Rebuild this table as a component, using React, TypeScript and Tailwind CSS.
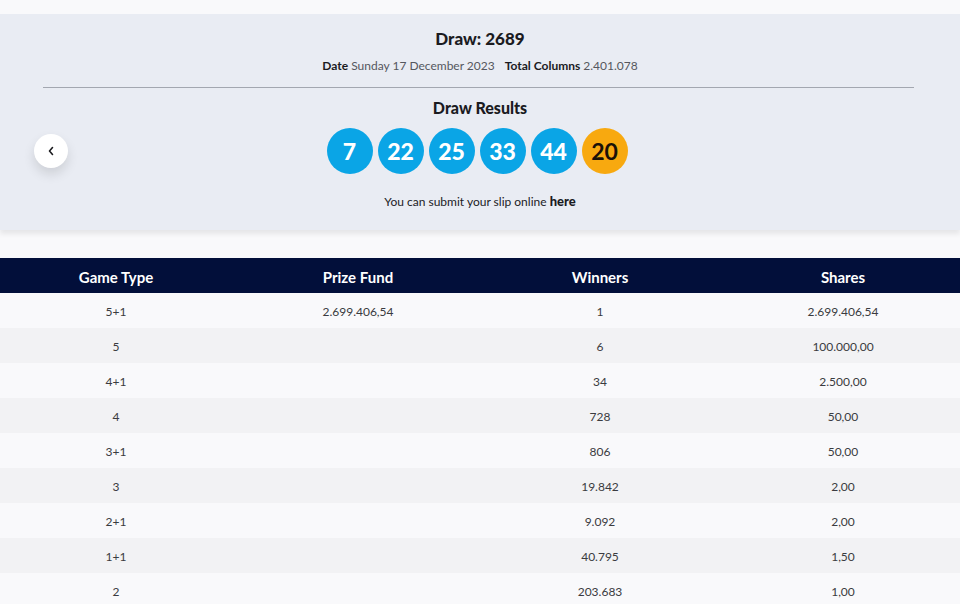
import React from "react";

const rows = [
  ["5+1", "2.699.406,54", "1", "2.699.406,54"],
  ["5", "", "6", "100.000,00"],
  ["4+1", "", "34", "2.500,00"],
  ["4", "", "728", "50,00"],
  ["3+1", "", "806", "50,00"],
  ["3", "", "19.842", "2,00"],
  ["2+1", "", "9.092", "2,00"],
  ["1+1", "", "40.795", "1,50"],
  ["2", "", "203.683", "1,00"],
];

export default function App() {
  const font = { fontFamily: '"Lato", "Liberation Sans", sans-serif' };
  return (
    <div className="w-[960px] h-[604px] overflow-hidden bg-[#f9f9fb] text-[#1b1b1f]" style={font}>
      <div className="h-[14px] bg-[#f9f9fb]" />
      <div className="relative h-[216px] bg-[#e9ecf3] shadow-[0_4px_5px_rgba(0,0,0,0.08)] flex flex-col items-center">
        <div className="mt-[14px] text-[17px] font-black leading-[22px]">Draw: 2689</div>
        <div className="mt-[8px] text-[12px] leading-[16px] text-[#55575e]">
          <span className="font-bold text-[#1b1b1f]">Date</span> Sunday 17 December 2023
          <span className="ml-[10px] font-bold text-[#1b1b1f]">Total Columns</span> 2.401.078
        </div>
        <div className="mt-[13px] w-[871px] h-px bg-[#a3a7b0] ml-[-3px]" />
        <div className="mt-[10px] text-[16px] font-black leading-[20px]">Draw Results</div>
        <div className="mt-[10px] flex gap-[5px] ml-[-6px]">
          {[7, 22, 25, 33, 44].map((n) => (
            <div key={n} className="w-[46px] h-[46px] rounded-full bg-[#0aa5e6] text-white flex items-center justify-center text-[23px] font-black">
              {n}
            </div>
          ))}
          <div className="w-[46px] h-[46px] rounded-full bg-[#f8a90f] text-[#1b1208] flex items-center justify-center text-[23px] font-bold">
            20
          </div>
        </div>
        <div className="mt-[19px] text-[12px] leading-[16px] text-[#1b1b1f]">
          You can submit your slip online <span className="font-black text-[13px]">here</span>
        </div>
        <button className="absolute left-[34px] top-[120px] w-[34px] h-[34px] rounded-full bg-white shadow-[0_6px_12px_rgba(0,0,0,0.12)] flex items-center justify-center">
          <svg width="8" height="10" viewBox="0 0 8 10" fill="none">
            <path d="M5.5 1.5 L2.5 5 L5.5 8.5" stroke="#1b1b1f" strokeWidth="1.6" strokeLinecap="round" strokeLinejoin="round" />
          </svg>
        </button>
      </div>
      <div className="h-[28px]" />
      <div className="grid grid-cols-4 h-[35px] pt-[3px] bg-[#020f3a] text-white text-[15px] font-bold items-center text-center">
        <div className="pr-[8px]">Game Type</div>
        <div className="pr-[4px]">Prize Fund</div>
        <div>Winners</div>
        <div className="pl-[6px]">Shares</div>
      </div>
      {rows.map((r, i) => (
        <div key={i} className={`grid grid-cols-4 h-[35px] pt-[3px] items-center text-center text-[12px] text-[#3a3b40] ${i % 2 === 0 ? "bg-[#f9f9fb]" : "bg-[#f2f2f4]"}`}>
          <div className="pr-[8px]">{r[0]}</div>
          <div className="pr-[4px]">{r[1]}</div>
          <div>{r[2]}</div>
          <div className="pl-[6px]">{r[3]}</div>
        </div>
      ))}
    </div>
  );
}
